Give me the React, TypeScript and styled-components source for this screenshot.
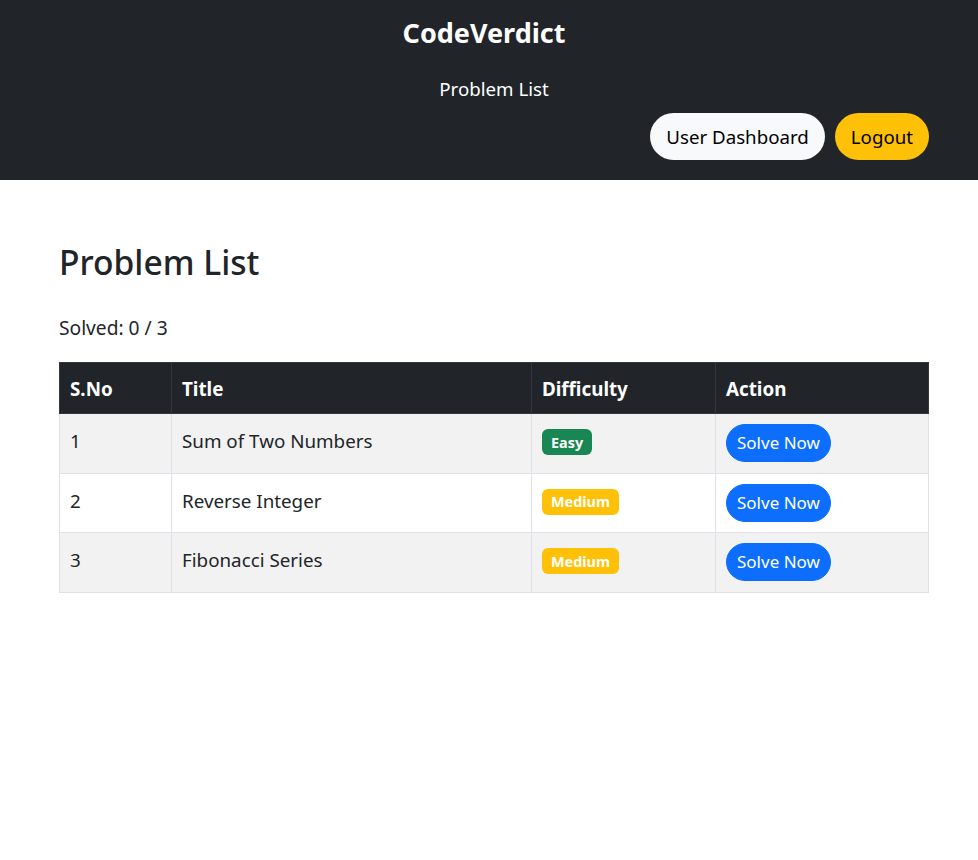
import React from "react";
import styled, { createGlobalStyle } from "styled-components";

const Global = createGlobalStyle`
  html, body { margin: 0; padding: 0; background: #fff; }
  body {
    font-family: "Segoe UI", "Noto Sans", "Liberation Sans", sans-serif;
    color: #212529;
    font-size: 16px;
    line-height: 1.5;
  }
  * { box-sizing: border-box; }
`;

const Header = styled.header`
  background: #212529;
  height: 180px;
  display: flex;
  flex-direction: column;
  align-items: center;
  padding: 12px 49px 0 59px;
`;

const Brand = styled.div`
  color: #fff;
  font-weight: 700;
  font-size: 27px;
  line-height: 42px;
  margin-left: -20px;
`;

const NavLink = styled.a`
  color: #fff;
  font-size: 18.7px;
  line-height: 28px;
  margin-top: 21px;
  text-decoration: none;
`;

const ButtonRow = styled.div`
  align-self: stretch;
  display: flex;
  justify-content: flex-end;
  gap: 10px;
  margin-top: 10px;
`;

const PillButton = styled.button<{ $variant: "light" | "warning" }>`
  font-family: inherit;
  font-size: 18.7px;
  line-height: 29px;
  padding: 8px 15px;
  border-radius: 50rem;
  border: 1px solid transparent;
  color: #000;
  background: ${(p) => (p.$variant === "light" ? "#f8f9fa" : "#ffc107")};
  cursor: pointer;
`;

const Main = styled.main`
  padding: 62px 49px 0 59px;
`;

const Title = styled.h2`
  margin: 0;
  font-size: 33.6px;
  font-weight: 500;
  line-height: 40px;
`;

const Solved = styled.p`
  margin: 31px 0 20px;
  font-size: 19.2px;
  line-height: 29px;
`;

const Table = styled.table`
  width: 100%;
  border-collapse: collapse;
  table-layout: fixed;
  font-size: 18.8px;
`;

const Th = styled.th<{ $w?: number }>`
  width: ${(p) => (p.$w ? `${p.$w}px` : "auto")};
  background: #212529;
  color: #fff;
  text-align: left;
  font-weight: 700;
  padding: 11px 10px 9px;
  border: 1px solid #32383e;
  line-height: 30px;
`;

const Tr = styled.tr<{ $striped: boolean }>`
  background: ${(p) => (p.$striped ? "#f2f2f2" : "#fff")};
`;

const Td = styled.td<{ $kind?: "text" | "control" }>`
  padding: ${(p) => (p.$kind === "control" ? "10px 10px 10.5px" : "12px 10px 8px")};
  border: 1px solid #dee2e6;
  line-height: 30px;
  vertical-align: top;
`;

const Badge = styled.span<{ $level: "Easy" | "Medium" }>`
  display: inline-block;
  margin-top: 5px;
  background: ${(p) => (p.$level === "Easy" ? "#198754" : "#ffc107")};
  color: #fff;
  font-weight: 700;
  font-size: 14.4px;
  line-height: 15px;
  padding: 5.5px 9px;
  border-radius: 6px;
`;

const SolveButton = styled.button`
  display: block;
  font-family: inherit;
  font-size: 17px;
  line-height: 26px;
  padding: 5px 10px;
  border-radius: 50rem;
  border: 1px solid #0d6efd;
  background: #0d6efd;
  color: #fff;
  cursor: pointer;
`;

const problems: { title: string; level: "Easy" | "Medium" }[] = [
  { title: "Sum of Two Numbers", level: "Easy" },
  { title: "Reverse Integer", level: "Medium" },
  { title: "Fibonacci Series", level: "Medium" },
];

export default function App() {
  return (
    <>
      <Global />
      <Header>
        <Brand>CodeVerdict</Brand>
        <NavLink href="#">Problem List</NavLink>
        <ButtonRow>
          <PillButton $variant="light">User Dashboard</PillButton>
          <PillButton $variant="warning">Logout</PillButton>
        </ButtonRow>
      </Header>
      <Main>
        <Title>Problem List</Title>
        <Solved>Solved: 0 / 3</Solved>
        <Table>
          <thead>
            <tr>
              <Th $w={112}>S.No</Th>
              <Th $w={360}>Title</Th>
              <Th $w={184}>Difficulty</Th>
              <Th>Action</Th>
            </tr>
          </thead>
          <tbody>
            {problems.map((p, i) => (
              <Tr key={p.title} $striped={i % 2 === 0}>
                <Td>{i + 1}</Td>
                <Td>{p.title}</Td>
                <Td $kind="control">
                  <Badge $level={p.level}>{p.level}</Badge>
                </Td>
                <Td $kind="control">
                  <SolveButton>Solve Now</SolveButton>
                </Td>
              </Tr>
            ))}
          </tbody>
        </Table>
      </Main>
    </>
  );
}
